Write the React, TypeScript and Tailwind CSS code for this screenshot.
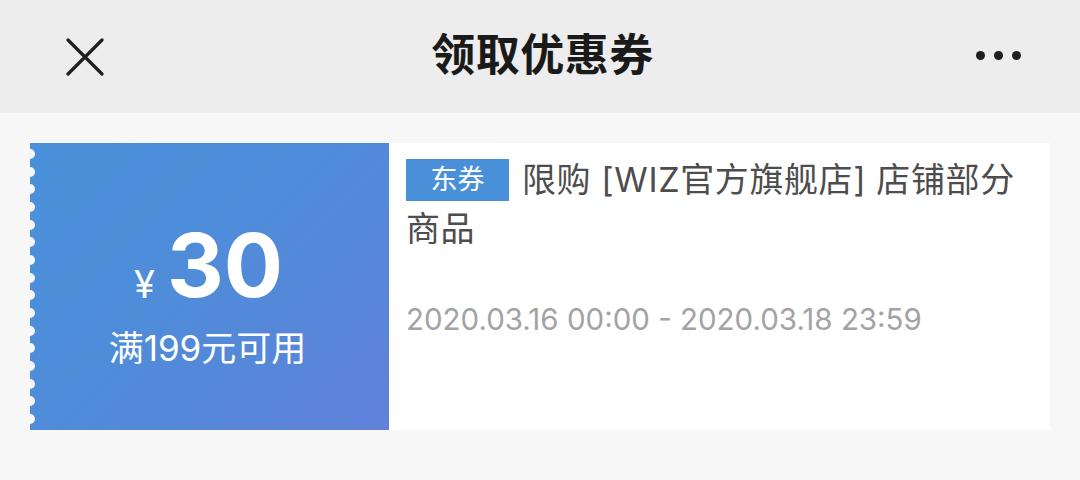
import React from "react";

const font = { fontFamily: '"Inter", "Noto Sans CJK SC", sans-serif' };

export default function App() {
  const notches = Array.from({ length: 16 });

  return (
    <div className="w-[1080px] h-[480px] bg-[#f7f7f7]" style={font}>
      {/* Top bar */}
      <div className="h-[113px] bg-[#ededed] flex items-center justify-between pl-[64px] pr-[59px]">
        <div className="w-[60px] flex items-center">
          <svg width="40" height="40" viewBox="0 0 40 40" className="-mt-[2px]">
            <path d="M4 4 L38 38 M38 4 L4 38" stroke="#1f1f1f" strokeWidth="3.2" strokeLinecap="round" />
          </svg>
        </div>
        <h1 className="text-[44px] font-bold text-[#1a1a1a] tracking-[0.5px] -mt-[3px]">领取优惠券</h1>
        <div className="w-[60px] flex items-center justify-end gap-[9px] -mt-[2px]">
          <span className="w-[9px] h-[9px] rounded-full bg-[#1f1f1f]" />
          <span className="w-[9px] h-[9px] rounded-full bg-[#1f1f1f]" />
          <span className="w-[9px] h-[9px] rounded-full bg-[#1f1f1f]" />
        </div>
      </div>

      {/* Coupon */}
      <div className="mx-[30px] mt-[30px] h-[287px] flex">
        <div className="relative w-[359px] bg-[linear-gradient(135deg,#4a91da_0%,#4f8cd9_45%,#6081d9_100%)] flex flex-col items-center pt-[78px]">
          <div className="absolute left-[-5px] top-0 bottom-0 flex flex-col justify-around py-[2px]">
            {notches.map((_, i) => (
              <span key={i} className="block w-[10px] h-[10px] rounded-full bg-[#f7f7f7]" />
            ))}
          </div>
          <div className="flex items-end text-white leading-none -ml-[2px]">
            <span className="text-[38px] mr-[12px] mb-[6px]">¥</span>
            <span className="text-[88px] font-bold">30</span>
          </div>
          <div className="mt-[22px] text-[35px] text-white leading-none -ml-[4px]">满199元可用</div>
        </div>

        <div className="flex-1 bg-white pl-[17px] pr-[20px] pt-[12px]">
          <p className="text-[34px] leading-[49px] text-[#4d4d4d] tracking-[0.6px]">
            <span className="inline-block align-middle bg-[#4a90d9] text-white text-[27px] leading-[42px] h-[42px] w-[103px] text-center tracking-normal mr-[13px] -mt-[6px]">
              东券
            </span>
            限购 [WIZ官方旗舰店] 店铺部分
            <br />
            商品
          </p>
          <div className="mt-[52px] text-[29.5px] leading-none text-[#a3a3a3]">
            2020.03.16 00:00 - 2020.03.18 23:59
          </div>
        </div>
      </div>
    </div>
  );
}
